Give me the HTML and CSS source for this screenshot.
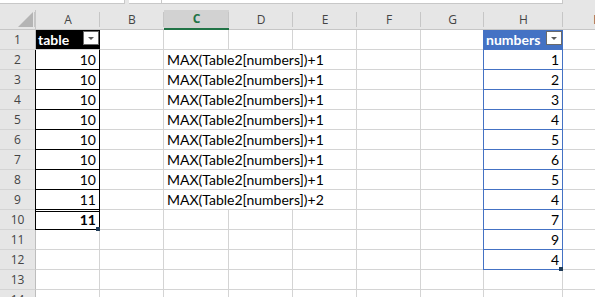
FILE: index.html
```html
<!DOCTYPE html>
<html>

<head>
	<title>Book1 - Excel</title>
	<link rel="stylesheet" href="styles.css">
</head>

<body>

	<!--FORMULA BAR REMAINS-->
	<div class="topbar">
		<div class="box box-name"></div>
		<div class="box box-fx"></div>
		<div class="box box-formula"></div>
	</div>

	<!--SHEET GRID-->
	<div class="sheet">
		<div class="hd corner"><div class="tri"></div></div>
		<div class="hd">A</div><div class="hd">B</div><div class="hd sel">C</div><div class="hd">D</div><div class="hd">E</div><div class="hd">F</div><div class="hd">G</div><div class="hd">H</div><div class="hd">I</div>

		<div class="rh">1</div>
		<div class="c ta-h"><span>table</span><span class="dd"><i></i></span></div>
		<div class="c"></div><div class="c"></div><div class="c"></div><div class="c"></div><div class="c"></div><div class="c"></div>
		<div class="c tb-h"><span>numbers</span><span class="dd"><i></i></span></div>
		<div class="c"></div>

		<!-- formula text spills over C, D and E -->
		<div class="rh">2</div><div class="c n ta">10</div><div class="c"></div><div class="c f">MAX(Table2[numbers])+1</div><div class="c"></div><div class="c"></div><div class="c n tb">1</div><div class="c"></div>
		<div class="rh">3</div><div class="c n ta">10</div><div class="c"></div><div class="c f">MAX(Table2[numbers])+1</div><div class="c"></div><div class="c"></div><div class="c n tb">2</div><div class="c"></div>
		<div class="rh">4</div><div class="c n ta">10</div><div class="c"></div><div class="c f">MAX(Table2[numbers])+1</div><div class="c"></div><div class="c"></div><div class="c n tb">3</div><div class="c"></div>
		<div class="rh">5</div><div class="c n ta">10</div><div class="c"></div><div class="c f">MAX(Table2[numbers])+1</div><div class="c"></div><div class="c"></div><div class="c n tb">4</div><div class="c"></div>
		<div class="rh">6</div><div class="c n ta">10</div><div class="c"></div><div class="c f">MAX(Table2[numbers])+1</div><div class="c"></div><div class="c"></div><div class="c n tb">5</div><div class="c"></div>
		<div class="rh">7</div><div class="c n ta">10</div><div class="c"></div><div class="c f">MAX(Table2[numbers])+1</div><div class="c"></div><div class="c"></div><div class="c n tb">6</div><div class="c"></div>
		<div class="rh">8</div><div class="c n ta">10</div><div class="c"></div><div class="c f">MAX(Table2[numbers])+1</div><div class="c"></div><div class="c"></div><div class="c n tb">5</div><div class="c"></div>
		<div class="rh">9</div><div class="c n ta">11</div><div class="c"></div><div class="c f">MAX(Table2[numbers])+2</div><div class="c"></div><div class="c"></div><div class="c n tb">4</div><div class="c"></div>
		<div class="rh">10</div><div class="c n ta tot handle">11</div><div class="c"></div><div class="c"></div><div class="c"></div><div class="c"></div><div class="c"></div><div class="c"></div><div class="c n tb">7</div><div class="c"></div>
		<div class="rh">11</div><div class="c"></div><div class="c"></div><div class="c"></div><div class="c"></div><div class="c"></div><div class="c"></div><div class="c"></div><div class="c n tb">9</div><div class="c"></div>
		<div class="rh">12</div><div class="c"></div><div class="c"></div><div class="c"></div><div class="c"></div><div class="c"></div><div class="c"></div><div class="c"></div><div class="c n tb handle">4</div><div class="c"></div>
		<div class="rh">13</div><div class="c"></div><div class="c"></div><div class="c"></div><div class="c"></div><div class="c"></div><div class="c"></div><div class="c"></div><div class="c"></div><div class="c"></div>
		<div class="rh">14</div><div class="c"></div><div class="c"></div><div class="c"></div><div class="c"></div><div class="c"></div><div class="c"></div><div class="c"></div><div class="c"></div><div class="c"></div>
	</div>

</body>

</html>
```

FILE: styles.css
```css
body {
	margin: 0;
	width: 595px;
	height: 297px;
	overflow: hidden;
	background-color: #fff;
}

/* formula bar leftovers */
.topbar {
	display: flex;
	height: 10px;
	background-color: #e6e6e6;
}

.box {
	height: 3px;
	background-color: #fff;
	border-bottom: 1px solid #c8c8c8;
	border-right: 1px solid #c8c8c8;
}

.box-name {
	width: 124px;
	margin-right: 4px;
}

.box-fx {
	width: 32px;
}

.box-formula {
	width: 400px;
}

/* grid */
.sheet {
	display: grid;
	grid-template-columns: 36px 64px 64px 65px 64px 64px 64px 63px 79px 64px;
	grid-auto-rows: 20px;
}

.sheet>div {
	box-sizing: border-box;
}

.hd {
	background: linear-gradient(#c6c6c6, #c6c6c6) right 2px / 1px 15px no-repeat, #e6e6e6;
	border-bottom: 1px solid #c6c6c6;
	color: #444;
	font-family: "Open Sans", sans-serif;
	font-size: 12px;
	line-height: 19px;
	text-align: center;
}

.hd.sel {
	background-color: #d2d2d2;
	color: #217346;
	font-weight: bold;
	border-bottom: 2px solid #217346;
	line-height: 18px;
}

.corner {
	display: flex;
	justify-content: flex-end;
	align-items: flex-end;
	padding: 0 2px 2px 0;
	border-right: 1px solid #c6c6c6;
}

.tri {
	width: 15px;
	height: 15px;
	background-color: #b4b4b4;
	clip-path: polygon(100% 0, 100% 100%, 0 100%);
}

.rh {
	background-color: #e6e6e6;
	border-right: 1px solid #bdbdbd;
	border-bottom: 1px solid #d4d4d4;
	color: #444;
	font-family: "Open Sans", sans-serif;
	font-size: 12px;
	line-height: 20px;
	text-align: center;
}

.c {
	border-right: 1px solid #d4d4d4;
	border-bottom: 1px solid #d4d4d4;
	padding: 0 3px;
	font-family: Lato, sans-serif;
	font-size: 14px;
	line-height: 20px;
	color: #000;
	white-space: nowrap;
}

.n {
	text-align: right;
}

.f {
	grid-column: span 3;
}

/* table A */
.ta-h,
.tb-h {
	display: flex;
	justify-content: space-between;
	align-items: flex-start;
	padding: 0 0 0 2px;
	color: #fff;
	font-weight: bold;
}

.ta-h {
	background-color: #000;
	border-right-color: #000;
}

.ta {
	border-right-color: #000;
	border-bottom-color: #000;
	box-shadow: -1px 0 0 #000;
}

.tot {
	font-weight: bold;
	background: linear-gradient(#000, #000) 0 1px / 100% 1px no-repeat;
}

/* table H */
.tb-h {
	background-color: #4472c4;
	border-right-color: #4472c4;
	border-bottom-color: #4472c4;
	box-shadow: -1px 0 0 #4472c4;
}

.tb {
	border-right-color: #4472c4;
	border-bottom-color: #4472c4;
	box-shadow: -1px 0 0 #4472c4;
}

.dd {
	display: flex;
	justify-content: center;
	align-items: center;
	width: 16px;
	height: 14px;
	margin-top: 1px;
	box-sizing: border-box;
	border: 1px solid #6a6a6a;
	background-color: #fff;
}

.dd i {
	border-left: 3.5px solid transparent;
	border-right: 3.5px solid transparent;
	border-top: 3.5px solid #5a5a5a;
}

.handle {
	position: relative;
}

.handle::after {
	content: "";
	position: absolute;
	right: -1px;
	bottom: -2px;
	width: 4px;
	height: 4px;
	background-color: #1f3b57;
}
```
